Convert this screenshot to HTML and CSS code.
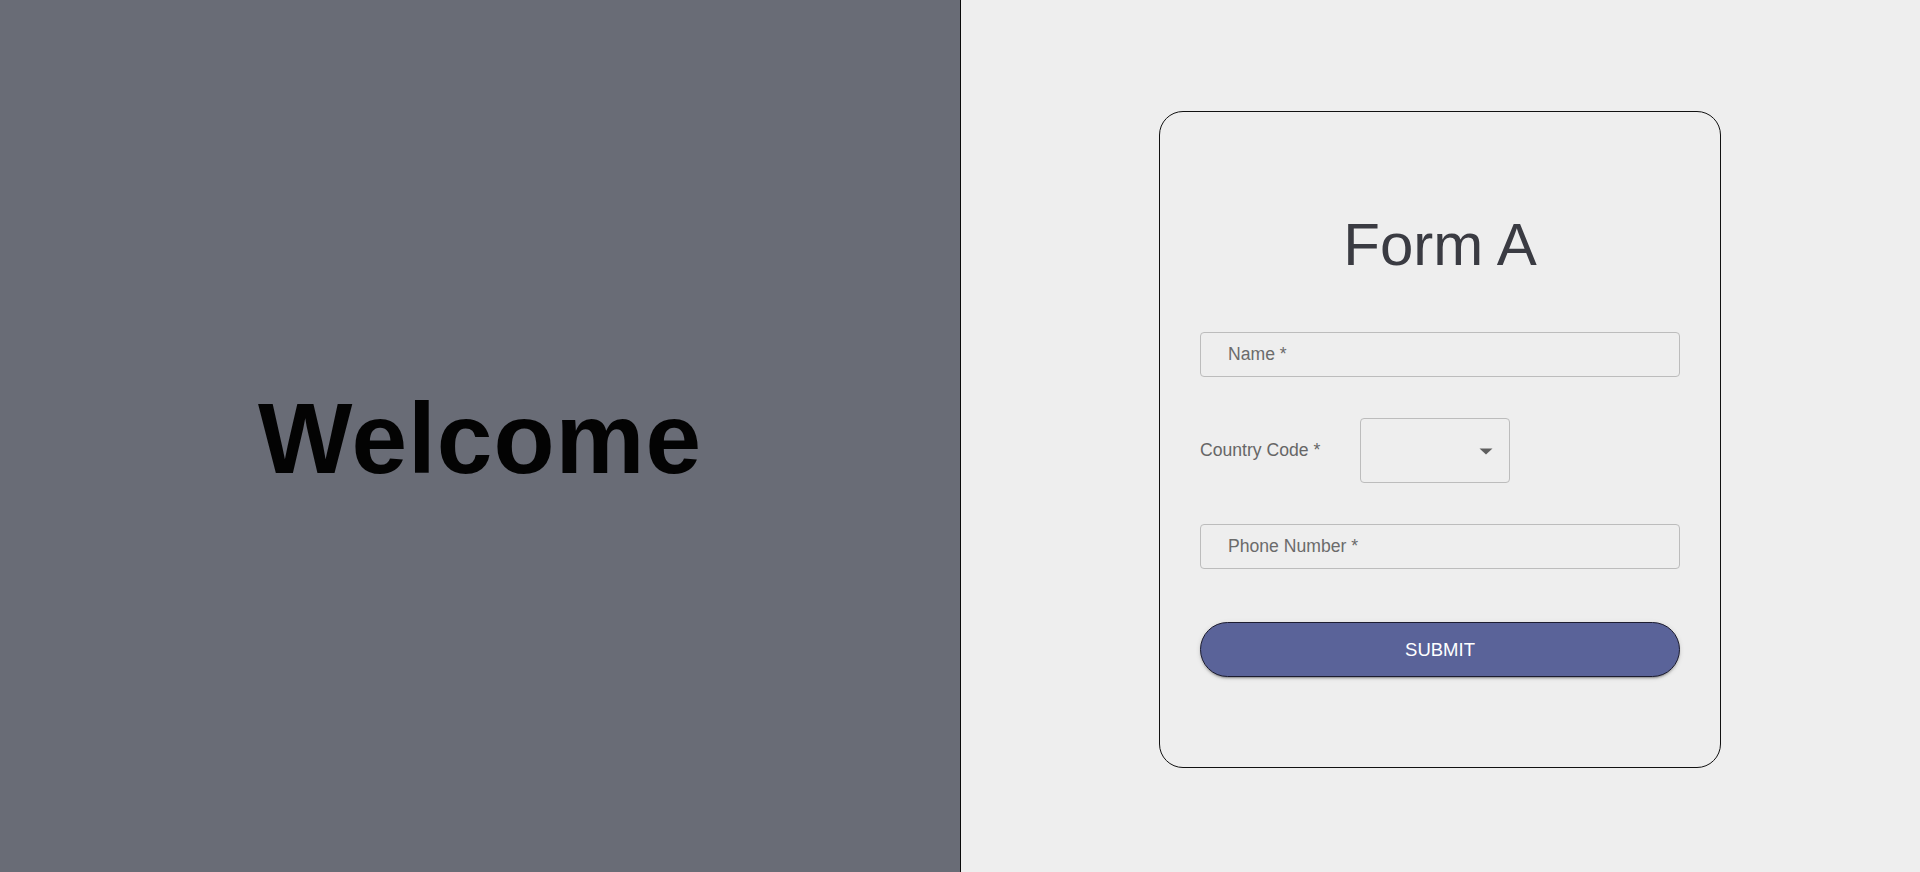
FILE: index.html
```html
<!DOCTYPE html>
<html lang="en">
<head>
<meta charset="utf-8">
<title>Form A</title>
<link rel="stylesheet" href="styles.css">
</head>
<body>
<div class="page">
  <section class="welcome-panel">
    <h1 class="welcome-title">Welcome</h1>
  </section>
  <section class="form-panel">
    <form class="card">
      <h2 class="card-title">Form A</h2>
      <input class="text-field" type="text" placeholder="Name *">
      <div class="country-row">
        <span class="country-label">Country Code *</span>
        <div class="select-box">
          <svg class="select-arrow" width="14" height="7" viewBox="0 0 14 7"><path d="M0.5 0.5 L13.5 0.5 L7 6.5 Z" fill="#5f5f5f"/></svg>
        </div>
      </div>
      <input class="text-field phone" type="text" placeholder="Phone Number *">
      <button class="submit-btn" type="button">Submit</button>
    </form>
  </section>
</div>
</body>
</html>
```

FILE: styles.css
```css
html, body {
  margin: 0;
  padding: 0;
  height: 872px;
  overflow: hidden;
  font-family: "Liberation Sans", Arial, sans-serif;
}

.page {
  display: flex;
  height: 872px;
  width: 1920px;
}

.welcome-panel {
  width: 960px;
  flex-shrink: 0;
  background: #696c76;
  display: flex;
  align-items: center;
  justify-content: center;
  border-right: 1px solid #0a0a0a;
}

.welcome-title {
  margin: 0;
  font-size: 100px;
  font-weight: 700;
  letter-spacing: 1px;
  color: #030303;
  line-height: 1;
  position: relative;
  top: 2px;
}

.form-panel {
  flex: 1;
  background: #eeeeee;
  display: flex;
  justify-content: center;
  align-items: flex-start;
  padding-top: 111px;
  padding-right: 1px;
}

.card {
  box-sizing: border-box;
  width: 562px;
  border: 1px solid #111;
  border-radius: 24px;
  background: #eeeeee;
  padding: 103px 40px 90px;
  display: flex;
  flex-direction: column;
}

.card-title {
  margin: 0;
  height: 60px;
  font-size: 60px;
  line-height: 1;
  font-weight: 400;
  text-align: center;
  color: #3a3b42;
}

.text-field {
  box-sizing: border-box;
  display: block;
  width: 100%;
  height: 45px;
  margin: 57px 0 0;
  padding: 0 0 0 27px;
  border: 1px solid #bcbcbc;
  border-radius: 4px;
  background: transparent;
  font-family: "Liberation Sans", Arial, sans-serif;
  font-size: 17.6px;
  color: #333;
  outline: none;
}

.text-field::placeholder {
  color: #6b6b6b;
  opacity: 1;
}

.text-field.phone {
  margin-top: 41px;
}

.country-row {
  display: flex;
  align-items: center;
  height: 65px;
  margin-top: 41px;
}

.country-label {
  width: 160px;
  flex-shrink: 0;
  font-size: 17.6px;
  color: #666666;
}

.select-box {
  box-sizing: border-box;
  width: 150px;
  height: 65px;
  border: 1px solid #bcbcbc;
  border-radius: 4px;
  display: flex;
  align-items: center;
  justify-content: flex-end;
  padding-right: 16px;
}

.select-arrow {
  display: block;
  margin-top: 1px;
}

.submit-btn {
  box-sizing: border-box;
  margin-top: 53px;
  width: 100%;
  height: 55px;
  border: 1px solid #1c1c30;
  border-radius: 28px;
  background: #5a6399;
  color: #ffffff;
  font-family: "Liberation Sans", Arial, sans-serif;
  font-size: 18.5px;
  text-transform: uppercase;
  cursor: pointer;
  box-shadow: 0 3px 1px -2px rgba(0,0,0,0.2), 0 2px 2px 0 rgba(0,0,0,0.14), 0 1px 5px 0 rgba(0,0,0,0.12);
}
```
